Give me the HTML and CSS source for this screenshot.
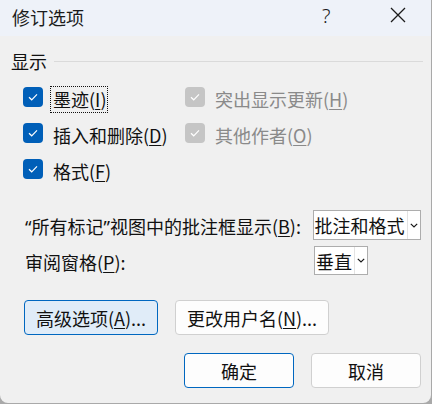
FILE: index.html
```html
<!DOCTYPE html>
<html lang="zh-CN">
<head>
    <meta charset="UTF-8">
    <title>修订选项</title>
    <link rel="stylesheet" href="styles.css">
</head>
<body>
    <div class="window">
        <div class="titlebar">
            <span class="title">修订选项</span>
            <span class="help">?</span>
            <span class="close">
                <svg width="16" height="16" viewBox="0 0 16 16"><path d="M1 1 L15 15 M15 1 L1 15" stroke="#1b1b1b" stroke-width="1.3" fill="none"/></svg>
            </span>
        </div>

        <div class="content">
            <div class="group-header">
                <span>显示</span>
                <div class="group-line"></div>
            </div>

            <div class="checks">
                <label class="check">
                    <span class="box"><svg width="20" height="20" viewBox="0 0 20 20"><path d="M6 10.3 L8.7 12.8 L14 7.4" stroke="#fff" stroke-width="1.2" fill="none"/></svg></span>
                    <span class="focus">墨迹(<u>I</u>)</span>
                </label>
                <label class="check disabled">
                    <span class="box"><svg width="20" height="20" viewBox="0 0 20 20"><path d="M6 10.3 L8.7 12.8 L14 7.4" stroke="#fff" stroke-width="1.2" fill="none"/></svg></span>
                    <span>突出显示更新(<u>H</u>)</span>
                </label>
                <label class="check">
                    <span class="box"><svg width="20" height="20" viewBox="0 0 20 20"><path d="M6 10.3 L8.7 12.8 L14 7.4" stroke="#fff" stroke-width="1.2" fill="none"/></svg></span>
                    <span>插入和删除(<u>D</u>)</span>
                </label>
                <label class="check disabled">
                    <span class="box"><svg width="20" height="20" viewBox="0 0 20 20"><path d="M6 10.3 L8.7 12.8 L14 7.4" stroke="#fff" stroke-width="1.2" fill="none"/></svg></span>
                    <span>其他作者(<u>O</u>)</span>
                </label>
                <label class="check">
                    <span class="box"><svg width="20" height="20" viewBox="0 0 20 20"><path d="M6 10.3 L8.7 12.8 L14 7.4" stroke="#fff" stroke-width="1.2" fill="none"/></svg></span>
                    <span>格式(<u>F</u>)</span>
                </label>
            </div>

            <div class="field-row first">
                <span class="field-label"><span class="latin">“</span>所有标记<span class="latin">”</span>视图中的批注框显示(<u>B</u>):</span>
                <div class="select wide">
                    <span class="select-text">批注和格式</span>
                    <span class="select-arrow"><svg width="8" height="5" viewBox="0 0 8 5"><path d="M0.8 0.8 L4 4 L7.2 0.8" stroke="#1b1b1b" stroke-width="1.2" fill="none"/></svg></span>
                </div>
            </div>
            <div class="field-row">
                <span class="field-label">审阅窗格(<u>P</u>):</span>
                <div class="select narrow">
                    <span class="select-text">垂直</span>
                    <span class="select-arrow"><svg width="8" height="5" viewBox="0 0 8 5"><path d="M0.8 0.8 L4 4 L7.2 0.8" stroke="#1b1b1b" stroke-width="1.2" fill="none"/></svg></span>
                </div>
            </div>

            <div class="button-row">
                <button class="btn btn-accent-light advanced">高级选项(<u>A</u>)...</button>
                <button class="btn username">更改用户名(<u>N</u>)...</button>
            </div>

            <div class="footer">
                <button class="btn btn-default dialog-btn">确定</button>
                <button class="btn dialog-btn">取消</button>
            </div>
        </div>
    </div>
</body>
</html>
```

FILE: styles.css
```css
html, body {
    margin: 0;
    padding: 0;
}
body {
    background: #a9a9a9;
    width: 432px;
    height: 404px;
    overflow: hidden;
    font-family: "Noto Sans CJK SC", "Noto Sans", sans-serif;
    font-size: 18px;
    color: #111;
}
u {
    text-decoration: underline;
    text-underline-offset: 2px;
    text-decoration-thickness: 1px;
}
.latin {
    font-family: "Noto Sans", sans-serif;
}
.window {
    width: 431px;
    height: 403px;
    background: #f0f0f0;
    border-radius: 0 0 8px 8px;
    overflow: hidden;
}
.titlebar {
    height: 36px;
    background: #eef2f9;
    display: flex;
    align-items: center;
    position: relative;
}
.title {
    font-size: 18px;
    line-height: 20px;
    margin-left: 12px;
    margin-top: -2px;
    color: #1b1b1b;
}
.help {
    position: absolute;
    left: 322px;
    top: 3px;
    font-family: "Noto Sans", sans-serif;
    font-weight: 300;
    font-size: 20px;
    line-height: 26px;
    color: #1b1b1b;
}
.close {
    position: absolute;
    left: 390px;
    top: 7px;
    width: 16px;
    height: 16px;
}
.close svg {
    display: block;
}

.content {
    padding: 0 10px 0 11px;
}
.group-header {
    display: flex;
    align-items: center;
    margin-top: 15px;
    height: 20px;
    line-height: 20px;
}
.group-line {
    flex: 1;
    height: 1px;
    background: #dadada;
    margin-left: 7px;
    margin-right: -2px;
}

.checks {
    display: grid;
    grid-template-columns: 162px auto;
    grid-auto-rows: 36px;
    margin: 8px 0 0 12px;
}
.check {
    display: flex;
    align-items: center;
    gap: 10px;
    line-height: 20px;
}
.box {
    width: 20px;
    height: 20px;
    border-radius: 4px;
    background: #005fb8;
    flex: none;
}
.box svg {
    display: block;
}
.check.disabled {
    color: #8a8a8a;
}
.check.disabled .box {
    background: #c5c5c5;
}
.check span:last-child {
    margin-top: 4px;
}
.focus {
    outline: 1px dotted #111;
    padding: 2px 1px 3px 2px;
    margin-left: -2px;
}

.field-row {
    display: flex;
    align-items: center;
    margin: 6px 0 0 14px;
}
.field-row.first {
    margin-top: 23px;
}
.field-label {
    width: 289px;
    line-height: 20px;
    padding-top: 3px;
    white-space: nowrap;
}
.select {
    display: flex;
    background: #fff;
    border: 1px solid #adadad;
    box-sizing: border-box;
}
.select.wide {
    width: 109px;
    height: 30px;
}
.select.narrow {
    width: 54px;
    height: 29px;
}
.select-text {
    flex: 1;
    font-size: 18px;
    line-height: 28px;
    padding-left: 1px;
    white-space: nowrap;
    overflow: hidden;
}
.select-arrow {
    width: 12px;
    border-left: 1px solid #e3e3e3;
    display: flex;
    align-items: center;
    justify-content: center;
}

.button-row {
    display: flex;
    gap: 17px;
    margin: 25px 0 0 13px;
}
.btn {
    font-family: inherit;
    font-size: 18px;
    color: #111;
    background: #fdfdfd;
    border: 1px solid #d0d0d0;
    border-radius: 4px;
    height: 35px;
    padding: 0;
    line-height: 20px;
}
.btn-accent-light {
    background: #e0ecf8;
    border-color: #0067c0;
}
.btn-default {
    background: #fdfdfd;
    border-color: #0067c0;
}
.advanced {
    width: 134px;
}
.username {
    width: 154px;
}
.footer {
    display: flex;
    justify-content: flex-end;
    gap: 17px;
    margin-top: 18px;
}
.dialog-btn {
    width: 110px;
}
```
